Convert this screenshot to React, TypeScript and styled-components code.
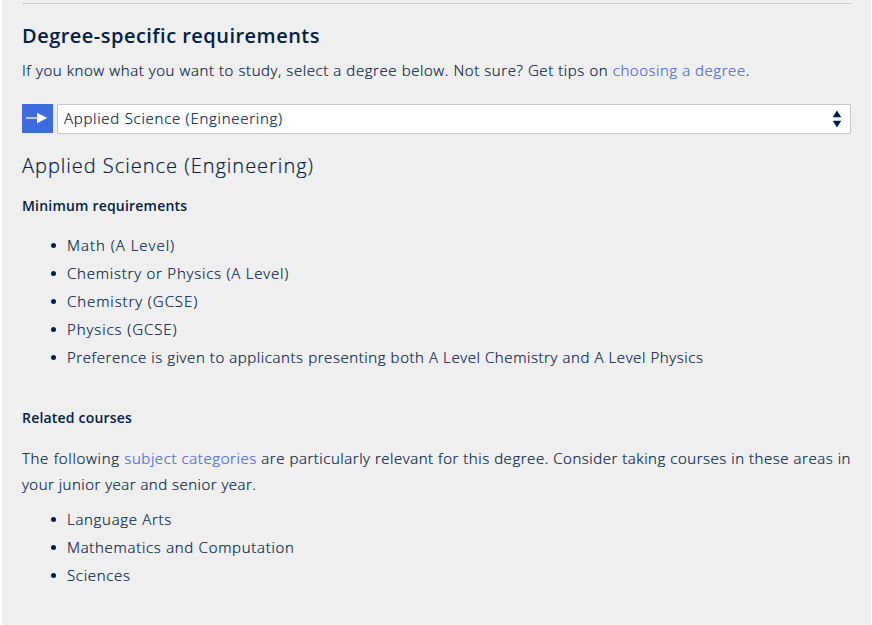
import React from 'react';
import styled, { createGlobalStyle } from 'styled-components';

const GlobalStyle = createGlobalStyle`
  * { box-sizing: border-box; }
  body {
    margin: 0;
    background: #fff;
    color: #002145;
    font-family: "Open Sans", "Noto Sans", sans-serif;
    font-weight: 300;
    font-size: 15px;
    -webkit-text-stroke: 0.2px currentColor;
  }
`;

const Panel = styled.main`
  width: 869px;
  height: 625px;
  margin-left: 2px;
  padding: 3px 20px 0;
  background: #efefef;
  overflow: hidden;
`;

const Divider = styled.hr`
  height: 1px;
  margin: 0 0 18px;
  border: 0;
  background: #cbcbcb;
`;

const Title = styled.h2`
  margin: 0;
  font-size: 20px;
  font-weight: 600;
  line-height: 28px;
  letter-spacing: 0.48px;
  -webkit-text-stroke: 0;
`;

const Text = styled.p<{ $top: number; $spacing: number }>`
  margin: ${(p) => p.$top}px 0 0;
  line-height: 26px;
  letter-spacing: ${(p) => p.$spacing}px;
  white-space: nowrap;
`;

const Lead = styled.span`
  letter-spacing: 0.7px;
`;

const Link = styled.a<{ $spacing: number }>`
  color: #4a63d8;
  text-decoration: none;
  letter-spacing: ${(p) => p.$spacing}px;
`;

const Picker = styled.div`
  display: flex;
  gap: 4px;
  height: 30px;
  margin-top: 21px;
`;

const ArrowTile = styled.span`
  display: flex;
  width: 31px;
  height: 29px;
  background: #3e6bdb;
`;

const SelectBox = styled.button`
  display: flex;
  flex: 1;
  align-items: center;
  justify-content: space-between;
  padding: 0 8px 1px 6px;
  border: 1px solid #c5c5c5;
  border-radius: 1px;
  background: #fff;
  color: inherit;
  font: inherit;
  line-height: 24px;
  letter-spacing: 0.74px;
`;

const SelectValue = styled.span`
  padding-bottom: 2px;
`;

const DegreeName = styled.h3`
  margin: 18px 0 0;
  font-size: 20px;
  font-weight: 300;
  line-height: 28px;
  letter-spacing: 0.99px;
`;

const Subheading = styled.h4<{ $top: number }>`
  margin: ${(p) => p.$top}px 0 0;
  font-size: 14px;
  font-weight: 600;
  line-height: 20px;
  letter-spacing: 0.2px;
  -webkit-text-stroke: 0;
`;

const List = styled.ul<{ $top: number }>`
  margin: ${(p) => p.$top}px 0 0;
  padding: 0;
  list-style: none;
`;

const Item = styled.li<{ $spacing: number }>`
  display: flex;
  align-items: center;
  padding-left: 29px;
  line-height: 28px;
  letter-spacing: ${(p) => p.$spacing}px;

  &::before {
    content: "";
    width: 5px;
    height: 5px;
    margin: 1px 11px 0 0;
    border-radius: 50%;
    background: #002145;
  }
`;

const requirements = [
  { label: 'Math (A Level)', spacing: 1 },
  { label: 'Chemistry or Physics (A Level)', spacing: 0.78 },
  { label: 'Chemistry (GCSE)', spacing: 0.92 },
  { label: 'Physics (GCSE)', spacing: 0.92 },
  {
    label: 'Preference is given to applicants presenting both A Level Chemistry and A Level Physics',
    spacing: 0.585,
  },
];

const subjects = [
  { label: 'Language Arts', spacing: 0.7 },
  { label: 'Mathematics and Computation', spacing: 0.71 },
  { label: 'Sciences', spacing: 0.68 },
];

export default function App() {
  return (
    <>
      <GlobalStyle />
      <Panel>
        <Divider />
        <Title>Degree-specific requirements</Title>
        <Text $top={7} $spacing={0.585}>
          If you know what you want to study, select a degree below. Not sure? Get tips on{' '}
          <Link href="#" $spacing={0.55}>choosing a degree</Link>.
        </Text>
        <Picker>
          <ArrowTile>
            <svg width="31" height="29" viewBox="0 0 31 29" aria-hidden="true">
              <path d="M4 14H17" stroke="#fff" strokeWidth="1.3" />
              <path d="M15 8.8L25.3 14L15 19.2Z" fill="#fff" />
            </svg>
          </ArrowTile>
          <SelectBox type="button">
            <SelectValue>Applied Science (Engineering)</SelectValue>
            <svg width="10" height="18" viewBox="0 0 10 18" aria-hidden="true">
              <path d="M5 0.5L9.3 7.2H0.7ZM0.7 10.8H9.3L5 17.5Z" fill="#002145" />
            </svg>
          </SelectBox>
        </Picker>
        <DegreeName>Applied Science (Engineering)</DegreeName>
        <Subheading $top={16}>Minimum requirements</Subheading>
        <List $top={15}>
          {requirements.map((r) => (
            <Item key={r.label} $spacing={r.spacing}>{r.label}</Item>
          ))}
        </List>
        <Subheading $top={37}>Related courses</Subheading>
        <Text $top={17} $spacing={0.54}>
          <Lead>The following </Lead>
          <Link href="#" $spacing={0.6}>subject categories</Link> are particularly relevant for this
          degree. Consider taking courses in these areas in
        </Text>
        <Text $top={0} $spacing={0.49}>your junior year and senior year.</Text>
        <List $top={8}>
          {subjects.map((s) => (
            <Item key={s.label} $spacing={s.spacing}>{s.label}</Item>
          ))}
        </List>
      </Panel>
    </>
  );
}
